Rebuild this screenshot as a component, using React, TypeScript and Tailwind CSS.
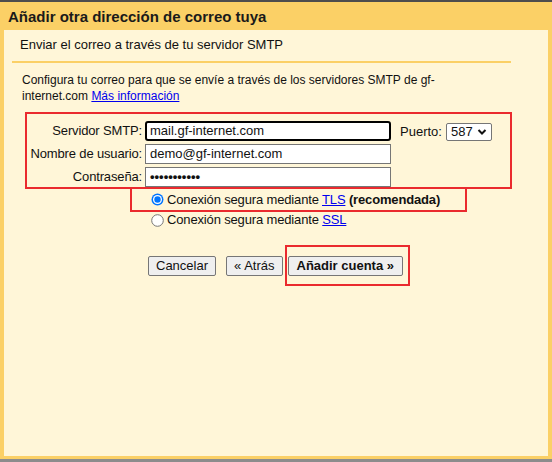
import React from "react";

const Radio = ({ checked }: { checked?: boolean }) => (
  <svg width="13" height="13" viewBox="0 0 13 13" className="shrink-0">
    {checked ? (
      <>
        <circle cx="6.5" cy="6.5" r="6" fill="#0075ff" />
        <circle cx="6.5" cy="6.5" r="4.5" fill="#ffffff" />
        <circle cx="6.5" cy="6.5" r="3.2" fill="#0075ff" />
      </>
    ) : (
      <circle cx="6.5" cy="6.5" r="5.8" fill="#ffffff" stroke="#767676" strokeWidth="1" />
    )}
  </svg>
);

const Btn = ({ children, bold }: { children: React.ReactNode; bold?: boolean }) => (
  <div
    className={`h-[20px] flex items-center bg-[#efefef] border border-[#767676] rounded-[2px] text-[13px] text-[#111] ${
      bold ? "font-bold px-[8px]" : "px-[7px]"
    }`}
  >
    {children}
  </div>
);

export default function App() {
  return (
    <div className="w-[552px] h-[462px] bg-[#8c8c8c] font-['Liberation_Sans',Arial,sans-serif] text-[13px] text-[#111] leading-[16px]">
      <div className="h-[459px] bg-[#fbd066] border-t-2 border-[#4d4d4d] flex flex-col">
        {/* title bar */}
        <div className="h-[28px] flex items-center pl-[8px] pt-[2px]">
          <h1 className="text-[15px] font-bold text-[#1a1a1a] leading-[20px]">
            Añadir otra dirección de correo tuya
          </h1>
        </div>

        {/* content panel */}
        <div className="mx-[4px] h-[426px] bg-[#fff6d8] flex flex-col items-start">
          <div className="pt-[7px] pl-[16px] text-[13px]">
            Enviar el correo a través de tu servidor SMTP
          </div>
          <div className="mt-[8px] ml-[8px] w-[499px] h-[2px] bg-[#fbd066]" />

          <p className="mt-[9px] ml-[18px] w-[430px] text-[12px]">
            Configura tu correo para que se envíe a través de los servidores SMTP de gf-internet.com{" "}
            <span className="text-[#0000ee] underline">Más información</span>
          </p>

          {/* server fields */}
          <div className="mt-[8px] ml-[21px] w-[487px] h-[77px] border-2 border-[#ea2a2e] pt-[7px] flex items-start">
            <div className="flex flex-col gap-[3px] w-[115px] items-end tracking-[-0.15px]">
              <div className="h-[20px] flex items-center">Servidor SMTP:</div>
              <div className="h-[20px] flex items-center">Nombre de usuario:</div>
              <div className="h-[20px] flex items-center">Contraseña:</div>
            </div>
            <div className="ml-[3px] flex flex-col gap-[3px]">
              <div className="w-[246px] h-[20px] border-2 border-black rounded-[3px] bg-white flex items-center pl-[3px]">
                mail.gf-internet.com
              </div>
              <div className="w-[246px] h-[20px] border border-[#767676] bg-white flex items-center pl-[4px]">
                demo@gf-internet.com
              </div>
              <div className="w-[246px] h-[20px] border border-[#767676] bg-white flex items-center pl-[4px] font-bold">
                •••••••••••
              </div>
            </div>
            <div className="ml-[9px] mt-[2px] flex items-center gap-[4px]">
              <span>Puerto:</span>
              <div className="w-[46px] h-[18px] border border-[#767676] rounded-[2px] bg-white flex items-center pl-[4px] gap-[4px]">
                <span>587</span>
                <svg width="10" height="8" viewBox="0 0 10 8">
                  <path d="M1.5 2 L5 5.5 L8.5 2" fill="none" stroke="#111" strokeWidth="2" />
                </svg>
              </div>
            </div>
          </div>

          {/* security */}
          <div className="ml-[126px] w-[337px] h-[23px] border-2 border-t-0 border-[#ea2a2e] flex items-center pl-[19px] gap-[3px] tracking-[-0.15px]">
            <Radio checked />
            <span>
              Conexión segura mediante <span className="text-[#0000ee] underline">TLS</span>{" "}
              <span className="font-bold">(recomendada)</span>
            </span>
          </div>
          <div className="ml-[147px] flex items-center gap-[3px] h-[16px] tracking-[-0.15px]">
            <Radio />
            <span>
              Conexión segura mediante <span className="text-[#0000ee] underline">SSL</span>
            </span>
          </div>

          {/* buttons */}
          <div className="mt-[17px] ml-[144px] flex items-center">
            <Btn>Cancelar</Btn>
            <div className="ml-[10px]">
              <Btn>« Atrás</Btn>
            </div>
            <div className="ml-[2px] border-2 border-[#ea2a2e] pl-[1px] pr-[5px] pt-[9px] pb-[8px]">
              <Btn bold>Añadir cuenta »</Btn>
            </div>
          </div>
        </div>
      </div>
    </div>
  );
}
